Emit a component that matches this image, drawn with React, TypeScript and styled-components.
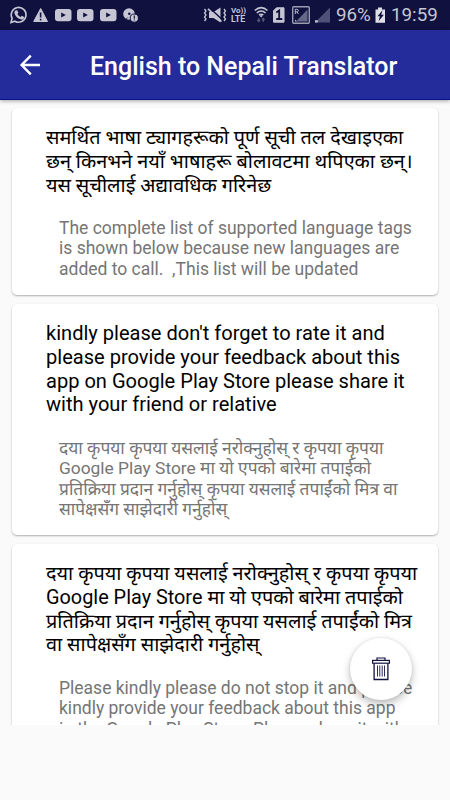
import React from "react";
import styled, { createGlobalStyle } from "styled-components";

const Global = createGlobalStyle`
  * { box-sizing: border-box; }
  html, body { margin: 0; background: #fafafa; }
  body { font-family: Roboto, "Noto Sans Devanagari", "Noto Sans", sans-serif; overflow: hidden; }
`;

const Screen = styled.div`
  width: 450px;
  height: 800px;
  display: flex;
  flex-direction: column;
  background: #fafafa;
  position: relative;
  overflow: hidden;
`;

const StatusBar = styled.header`
  flex: none;
  height: 30px;
  background: #10113f;
  color: #c5c5d3;
  display: flex;
  align-items: center;
  justify-content: space-between;
  padding: 0 11px 0 9px;
`;

const StatusGroup = styled.div`
  display: flex;
  align-items: center;
  height: 30px;
  svg { display: block; flex: none; }
`;

const StatusText = styled.span<{ $width: number; $left: number }>`
  width: ${(p) => p.$width}px;
  margin-left: ${(p) => p.$left}px;
  font-size: 18.8px;
  line-height: 31px;
  white-space: nowrap;
`;

const VolteLabel = styled.span`
  display: flex;
  flex-direction: column;
  width: 16px;
  margin: 0 6px 0 4px;
  font-size: 8px;
  font-weight: 700;
  line-height: 8px;
  white-space: nowrap;
`;

const LteText = styled.span`
  font-size: 8.8px;
`;

const AppBar = styled.nav`
  flex: none;
  height: 70px;
  background: #242c9b;
  border-bottom: 1px solid #0b1187;
  box-shadow: 0 1px 4px rgba(0, 0, 0, 0.35);
  display: flex;
  align-items: center;
  padding-left: 19px;
  z-index: 1;
`;

const BackButton = styled.button`
  border: 0;
  padding: 0;
  width: 71px;
  background: none;
  svg { display: block; }
`;

const Title = styled.h1`
  margin: 4px 0 0;
  color: #fff;
  font-size: 25px;
  line-height: 30px;
  font-weight: 500;
  white-space: nowrap;
`;

const List = styled.main`
  height: 625px;
  flex: none;
  overflow: hidden;
  padding: 8px 12px 0;
  display: flex;
  flex-direction: column;
  gap: 9px;
`;

const Card = styled.article<{ $height: number }>`
  flex: none;
  height: ${(p) => p.$height}px;
  background: #fff;
  border-radius: 5px;
  box-shadow: 0 1px 2px rgba(0, 0, 0, 0.3);
  padding: 17.8px 0 0 34px;
`;

const Heading = styled.div<{ $nepali: boolean }>`
  color: #000;
  font-size: ${(p) => (p.$nepali ? 19.86 : 20.07)}px;
`;

const Translation = styled.div<{ $nepali: boolean }>`
  margin: 20.3px 0 0 13px;
  color: #757575;
  font-size: ${(p) => (p.$nepali ? 17.36 : 17.5)}px;
`;

const Line = styled.div<{ $pitch: number }>`
  height: ${(p) => p.$pitch}px;
  line-height: ${(p) => p.$pitch}px;
  white-space: pre;
`;

const DeleteButton = styled.button`
  position: absolute;
  left: 350px;
  top: 638px;
  width: 62px;
  height: 62px;
  border: 0;
  padding: 0;
  border-radius: 50%;
  background: #fff;
  box-shadow: 0 4px 8px rgba(0, 0, 0, 0.26), 0 0 3px rgba(0, 0, 0, 0.1);
  display: flex;
  align-items: center;
  justify-content: center;
  z-index: 2;
`;

type Entry = { height: number; nepaliFirst: boolean; heading: string[]; translation: string[] };

const entries: Entry[] = [
  {
    height: 187,
    nepaliFirst: true,
    heading: [
      "समर्थित भाषा ट्यागहरूको पूर्ण सूची तल देखाइएका",
      "छन् किनभने नयाँ भाषाहरू बोलावटमा थपिएका छन्।",
      "यस सूचीलाई अद्यावधिक गरिनेछ",
    ],
    translation: [
      "The complete list of supported language tags",
      "is shown below because new languages are",
      "added to call.  ,This list will be updated",
    ],
  },
  {
    height: 231,
    nepaliFirst: false,
    heading: [
      "kindly please don't forget to rate it and",
      "please provide your feedback about this",
      "app on Google Play Store please share it",
      "with your friend or relative",
    ],
    translation: [
      "दया कृपया कृपया यसलाई नरोक्नुहोस् र कृपया कृपया",
      "Google Play Store मा यो एपको बारेमा तपाईको",
      "प्रतिक्रिया प्रदान गर्नुहोस् कृपया यसलाई तपाईंको मित्र वा",
      "सापेक्षसँग साझेदारी गर्नुहोस्",
    ],
  },
  {
    height: 231,
    nepaliFirst: true,
    heading: [
      "दया कृपया कृपया यसलाई नरोक्नुहोस् र कृपया कृपया",
      "Google Play Store मा यो एपको बारेमा तपाईको",
      "प्रतिक्रिया प्रदान गर्नुहोस् कृपया यसलाई तपाईंको मित्र",
      "वा सापेक्षसँग साझेदारी गर्नुहोस्",
    ],
    translation: [
      "Please kindly please do not stop it and please",
      "kindly provide your feedback about this app",
      "in the Google Play Store. Please share it with",
    ],
  },
];

const NotificationIcons = () => (
  <svg width="132" height="30" viewBox="9 0 132 30" fill="none">
    <path d="M11 22.5l1.1-4.2a7.4 7.4 0 1 1 2.8 2.9z" stroke="#c5c5d3" strokeWidth="1.6" />
    <path d="M15.5 10.5l1.8-.3 1.1 2.5-1 1.2c.8 1.5 1.8 2.4 3.3 3.1l1.1-1.2 2.3 1.2c0 2-1.3 2.7-2.7 2.5-3.8-.7-7.1-4.3-7-7.2 0-.8.5-1.4 1.1-1.8z" fill="#c5c5d3" />
    <path d="M40.7 8.5L47.5 21.5H33.7z" fill="#c5c5d3" stroke="#c5c5d3" strokeLinejoin="round" />
    <path d="M40.6 12.5v5M40.6 18.8v1.6" stroke="#10113f" strokeWidth="1.6" />
    {[55, 77, 100].map((x) => (
      <g key={x}>
        <rect x={x} y="9" width="16.5" height="12.2" rx="3" fill="#c5c5d3" />
        <path d={`M${x + 6.2} 12.4l4.6 2.6-4.6 2.6z`} fill="#10113f" />
      </g>
    ))}
    <circle cx="129" cy="14" r="5.8" fill="#c5c5d3" />
    <circle cx="129.3" cy="13.8" r="1.2" fill="#10113f" />
    <path d="M125.5 19.8l2.2-2.3" stroke="#10113f" strokeWidth=".8" />
    <circle cx="134.3" cy="18.1" r="4.1" fill="#c5c5d3" stroke="#10113f" strokeWidth="1" />
    <path d="M134.3 15.5v3.2M134.3 19.6v1" stroke="#10113f" strokeWidth="1.1" />
  </svg>
);

const VibrateIcon = () => (
  <svg width="24" height="30" viewBox="203 0 24 30" fill="none" stroke="#c5c5d3">
    <path d="M204.5 9l1.5 2-1.5 2 1.5 2-1.5 2 1.5 2-1.5 2M224 9l1.5 2-1.5 2 1.5 2-1.5 2 1.5 2-1.5 2" strokeWidth="1.3" />
    <path d="M209 12h4.5l7-4.5v15l-7-4.5H209z" fill="#c5c5d3" stroke="none" />
    <path d="M209.7 8l13 12" stroke="#10113f" strokeWidth="1.5" />
    <path d="M208 8.8l13.5 12.7" strokeWidth="1.7" />
  </svg>
);

const SignalIcons = () => (
  <svg width="78" height="30" viewBox="253 0 78 30" fill="none">
    <path d="M254.8 10.5c4-3.7 8.7-3.7 12.7 0M256.8 13c2.6-2.5 6.1-2.5 8.7 0M259 15.2c1.3-1.1 3-1.1 4.3 0" stroke="#c5c5d3" strokeWidth="1.6" />
    <path d="M261.1 14.8l1.4 1.3-1.4 1.4-1.4-1.4z" fill="#c5c5d3" />
    <path d="M258.7 18v3.8M257.3 20l1.4 1.5 1.4-1.5M263.3 22v-3.5M262 20l1.3-1.5 1.3 1.5" stroke="#555879" strokeWidth="1.2" />
    <path d="M276.5 7.8h7.5v14.4h-10.5V10.8z" fill="#c5c5d3" stroke="#c5c5d3" strokeLinejoin="round" />
    <path d="M276.3 12.5l2.9-2v8.5M276.3 19h6" stroke="#10113f" strokeWidth="1.8" />
    <rect x="292.7" y="6.7" width="16.6" height="16.6" rx="1" stroke="#9b9cb1" strokeWidth="1.4" />
    <path d="M295.3 14V9.3h1.6q1.4 0 1.4 1.3t-1.4 1.3h-1.6M296.9 11.9l1.5 2.1" stroke="#c5c5d3" strokeWidth=".9" />
    <path d="M307.5 9.5v12H296z" fill="#666889" />
    <path d="M295 19.5v2h2z" fill="#c5c5d3" />
    <path d="M330 7.5v15h-15z" fill="#4e5178" />
    <path d="M315 20.2h2.8v2.3H315z" fill="#c5c5d3" />
  </svg>
);

const BatteryIcon = () => (
  <svg width="11" height="30" viewBox="375 0 11 30">
    <path d="M378 7.5h4v2h3v13.2h-9.5V9.5h2.5z" fill="#e0e0e8" />
    <path d="M382.5 10.3l-5 6h2.4l-1.3 5 5.3-6.6h-2.6z" fill="#10113f" />
  </svg>
);

const BackIcon = () => (
  <svg width="23" height="22" viewBox="0 0 23 22" fill="none" stroke="#fff" strokeWidth="2.4">
    <path d="M11.8 1.7L2.6 11l9.2 9.3M2.5 11H21" />
  </svg>
);

const TrashIcon = () => (
  <svg width="18" height="24" viewBox="0 0 18 24" fill="none" stroke="#12133f">
    <path d="M5 3V1h8v2" strokeWidth="1.2" />
    <rect x=".6" y="3.4" width="16.8" height="2.8" strokeWidth="1.2" />
    <path d="M2.1 6.5v16h13.8v-16" strokeWidth="1.3" />
    <path d="M5.5 8.5v11M7.8 8.5v11M10.2 8.5v11M12.5 8.5v11" strokeWidth=".9" />
  </svg>
);

export default function App() {
  return (
    <Screen>
      <Global />
      <StatusBar>
        <StatusGroup>
          <NotificationIcons />
        </StatusGroup>
        <StatusGroup>
          <VibrateIcon />
          <VolteLabel>
            <span>Vo))</span>
            <LteText>LTE</LteText>
          </VolteLabel>
          <SignalIcons />
          <StatusText $width={39} $left={5}>96%</StatusText>
          <BatteryIcon />
          <StatusText $width={48} $left={5}>19:59</StatusText>
        </StatusGroup>
      </StatusBar>
      <AppBar>
        <BackButton aria-label="Back">
          <BackIcon />
        </BackButton>
        <Title>English to Nepali Translator</Title>
      </AppBar>
      <List>
        {entries.map((entry, i) => (
          <Card key={i} $height={entry.height}>
            <Heading $nepali={entry.nepaliFirst}>
              {entry.heading.map((text) => (
                <Line key={text} $pitch={23.9}>{text}</Line>
              ))}
            </Heading>
            <Translation $nepali={!entry.nepaliFirst}>
              {entry.translation.map((text) => (
                <Line key={text} $pitch={20.6}>{text}</Line>
              ))}
            </Translation>
          </Card>
        ))}
      </List>
      <DeleteButton aria-label="Delete">
        <TrashIcon />
      </DeleteButton>
    </Screen>
  );
}
